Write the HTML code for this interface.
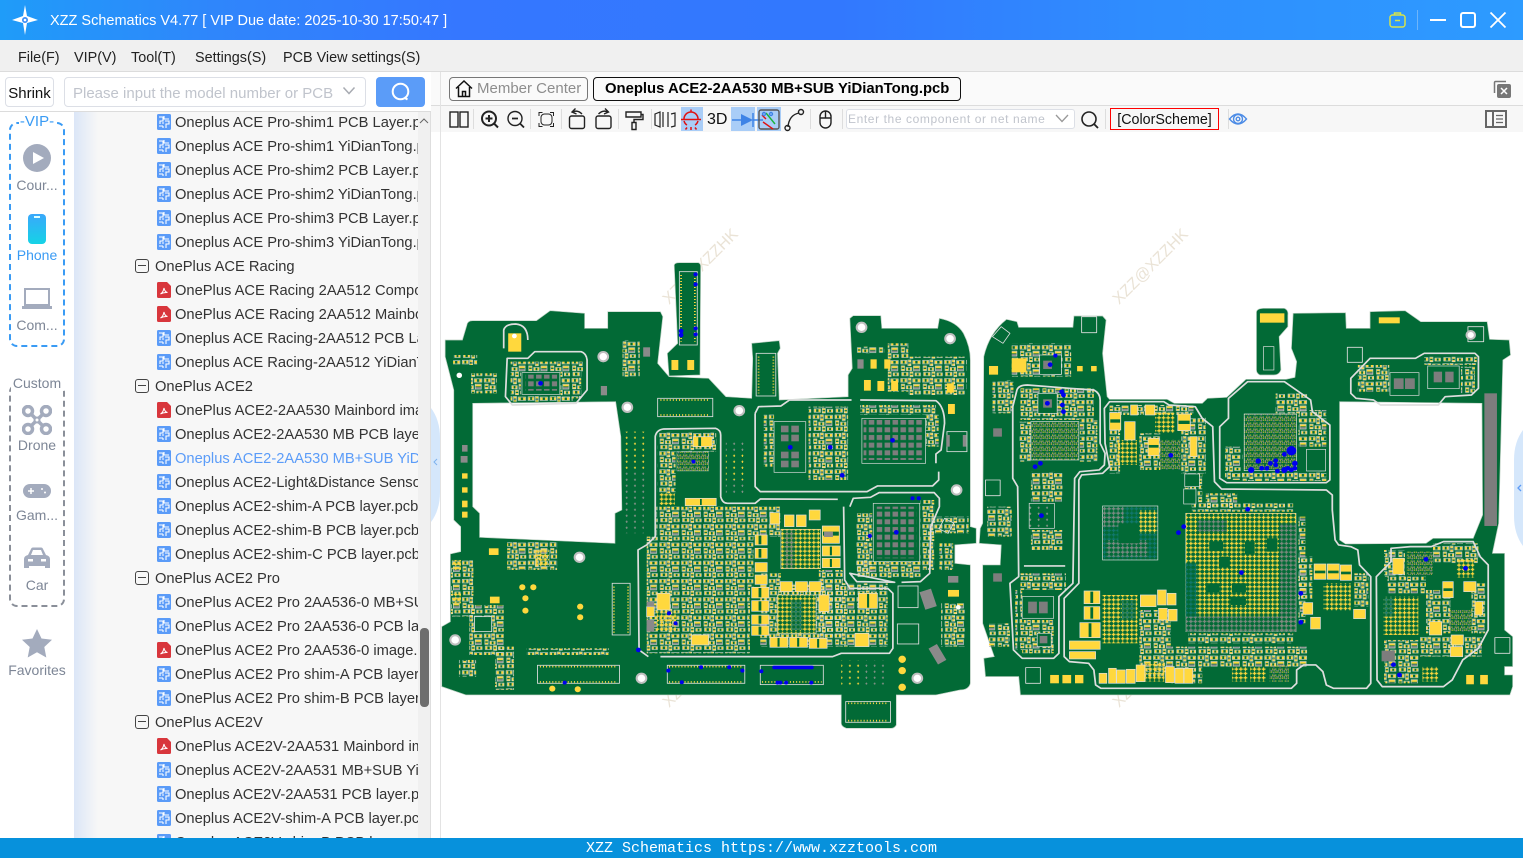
<!DOCTYPE html>
<html><head><meta charset="utf-8"><title>XZZ Schematics</title>
<style>
*{box-sizing:border-box;margin:0;padding:0}
html,body{width:1523px;height:858px;overflow:hidden;background:#fff;font-family:"Liberation Sans","Noto Sans CJK SC",sans-serif;color:#222}
.a{position:absolute}
#page{position:relative;width:1523px;height:858px;overflow:hidden}
.t{position:absolute;white-space:nowrap}
.m{top:48px;font-size:14.4px;line-height:20px;color:#222}
.r{position:absolute;left:0;height:24px;width:344px;font-size:14.7px;line-height:24px;white-space:nowrap;color:#333}
.r svg{position:absolute;left:83px;top:4px}
.r span{position:absolute;left:101px;top:1px}
.r.g span{left:81px}
.r.g i{position:absolute;left:61px;top:5px;width:14px;height:14px;border:1.3px solid #444;border-radius:3px}
.r.g i:after{content:"";position:absolute;left:2px;right:2px;top:5px;height:1.4px;background:#444}
.lab{position:absolute;left:0;width:74px;text-align:center;font-size:14px;color:#7d8696;line-height:18px}
.sep{position:absolute;top:109px;width:1px;height:20px;background:#ddd}
</style></head><body><div id="page">
<svg width="0" height="0" style="position:absolute"><defs>
<symbol id="pcb" viewBox="0 0 14 16"><rect width="14" height="16" rx="1.5" fill="#5a9bf8"/><path d="M2 3h4v4H3v3M7 2v3h5M8 7h4v3H9v4M2 12h4M6 12v2M5 9h2" fill="none" stroke="#fff" stroke-width="1.1"/></symbol>
<symbol id="pdf" viewBox="0 0 14 16"><path d="M1.5 0H10l4 4v10.5a1.5 1.5 0 0 1-1.5 1.5h-11A1.5 1.5 0 0 1 0 14.500V1.500A1.500 1.500 0 0 1 1.500 0z" fill="#d8363c"/><path d="M3.500 12c2-1 3-3.500 3.500-6 .4 2.500 1.500 4 3.500 4.500-2.500-.2-5 .3-7 1.500z" fill="none" stroke="#fff" stroke-width="1"/></symbol>
</defs></svg>

<!-- title bar -->
<div class="a" style="left:0;top:0;width:1523px;height:40px;background:linear-gradient(90deg,#1f9cf9 0,#2f86fb 14%,#3577ff 30%,#3278fe 55%,#2f8dfe 75%,#2d9bff 100%)"></div>
<svg class="a" style="left:10px;top:4px" width="30" height="32" viewBox="0 0 30 32"><path d="M15 1l2 11 11 4-11 3-2 12-2-12-11-3 11-4z" fill="#fff"/><circle cx="15" cy="16" r="3" fill="#3a8ef8"/><circle cx="15" cy="16" r="1.300" fill="#fff"/></svg>
<div class="t" style="left:50px;top:11px;font-size:14.5px;line-height:20px;color:#fff">XZZ Schematics V4.77 [ VIP Due date: 2025-10-30 17:50:47 ]</div>
<svg class="a" style="left:1388px;top:10px" width="20" height="20" viewBox="0 0 20 20"><rect x="2" y="5" width="15" height="12" rx="2.500" fill="none" stroke="#d7e34a" stroke-width="1.500"/><path d="M6.500 5V3h6v2M7 10.500h5" fill="none" stroke="#d7e34a" stroke-width="1.500"/></svg>
<div class="a" style="left:1417px;top:10px;width:1px;height:20px;background:#6eb5fa"></div>
<div class="a" style="left:1430px;top:19px;width:16px;height:2px;background:#fff"></div>
<div class="a" style="left:1460px;top:12px;width:16px;height:16px;border:2px solid #fff;border-radius:3px"></div>
<svg class="a" style="left:1489px;top:11px" width="18" height="18"><path d="M1.500 1.500l15 15M16.500 1.500l-15 15" stroke="#fff" stroke-width="1.800"/></svg>

<!-- menu -->
<div class="a" style="left:0;top:40px;width:1523px;height:32px;background:#f0f0f0;border-bottom:1px solid #dcdcdc"></div>
<div class="t m" style="left:18px">File(F)</div><div class="t m" style="left:74px">VIP(V)</div><div class="t m" style="left:131px">Tool(T)</div><div class="t m" style="left:195px">Settings(S)</div><div class="t m" style="left:283px">PCB View settings(S)</div>

<!-- search row -->
<div class="a" style="left:0;top:72px;width:431px;height:40px;background:#fff;border-bottom:1px solid #dcdcdc"></div>
<div class="a" style="left:5px;top:77px;width:49px;height:30px;border:1px solid #dcdfe6;border-radius:4px;font-size:15px;line-height:31px;text-align:center;color:#111">Shrink</div>
<div class="a" style="left:64px;top:77px;width:302px;height:30px;border:1px solid #dcdfe6;border-radius:4px"></div>
<div class="t" style="left:73px;top:84px;font-size:15px;line-height:20px;color:#c0c4cc">Please input the model number or PCB</div>
<svg class="a" style="left:342px;top:86px" width="14" height="10"><path d="M1.500 1.500L7 7.500l5.500-6" fill="none" stroke="#a8abb2" stroke-width="1.500"/></svg>
<div class="a" style="left:376px;top:77px;width:49px;height:30px;background:#5b9cf8;border-radius:4px"></div>
<svg class="a" style="left:390px;top:81px" width="22" height="22"><circle cx="10.500" cy="10.500" r="7.800" fill="none" stroke="#fff" stroke-width="2"/><path d="M15 17l2.500 1.500" stroke="#fff" stroke-width="2"/></svg>

<!-- left rail -->
<div class="a" style="left:9px;top:122px;width:56px;height:225px;border:2px dashed #3a9bf4;border-radius:8px"></div>
<div class="a" style="left:19px;top:113px;width:36px;height:18px;background:#fff;font-size:15px;line-height:18px;color:#3a9bf4;text-align:center">-VIP-</div>
<svg class="a" style="left:23px;top:144px" width="28" height="28"><circle cx="14" cy="14" r="14" fill="#a3abbd"/><path d="M10 8l11 6-11 6z" fill="#fff"/></svg>
<div class="lab" style="top:176px">Cour...</div>
<div class="a" style="left:28px;top:214px;width:18px;height:30px;border-radius:4px;background:linear-gradient(180deg,#3aa8fb,#15d3e6)"></div>
<div class="a" style="left:34px;top:216px;width:6px;height:1.500px;background:#dff"></div>
<div class="lab" style="top:246px;color:#3a9bf4">Phone</div>
<svg class="a" style="left:22px;top:288px" width="30" height="22"><rect x="3" y="1" width="24" height="16" fill="none" stroke="#a3abbd" stroke-width="2"/><path d="M0 18h30v3H0z" fill="#a3abbd"/></svg>
<div class="lab" style="top:316px">Com...</div>
<div class="a" style="left:9px;top:384px;width:56px;height:223px;border:2px dashed #8a8f99;border-radius:8px"></div>
<div class="a" style="left:11px;top:374px;width:52px;height:18px;background:#fff;font-size:14px;line-height:18px;color:#7d8696;text-align:center">Custom</div>
<svg class="a" style="left:22px;top:405px" width="30" height="30" fill="none" stroke="#a3abbd" stroke-width="3.500"><circle cx="6" cy="6" r="4.500"/><circle cx="24" cy="6" r="4.500"/><circle cx="6" cy="24" r="4.500"/><circle cx="24" cy="24" r="4.500"/><path d="M8 8l14 14M22 8L8 22"/><circle cx="15" cy="15" r="2.500" fill="#fff" stroke-width="2"/></svg>
<div class="lab" style="top:436px">Drone</div>
<svg class="a" style="left:23px;top:484px" width="28" height="14"><rect width="28" height="14" rx="7" fill="#a3abbd"/><path d="M5 7h6M8 4v6" stroke="#fff" stroke-width="1.500"/><circle cx="19" cy="5" r="1" fill="#fff"/><circle cx="22" cy="8.500" r="1" fill="#fff"/></svg>
<div class="lab" style="top:506px">Gam...</div>
<svg class="a" style="left:23px;top:547px" width="28" height="24"><path d="M5 8l3-6q.5-1.500 2-1.500h8q1.500 0 2 1.500l3 6q4 1 4 4v9h-5v-2H6v2H1v-9q0-3 4-4z" fill="#a3abbd"/><path d="M8 8l2-5h8l2 5z" fill="#fff"/><rect x="5" y="12" width="5" height="2.500" fill="#fff"/><rect x="18" y="12" width="5" height="2.500" fill="#fff"/></svg>
<div class="lab" style="top:576px">Car</div>
<svg class="a" style="left:22px;top:629px" width="30" height="29"><path d="M15 0l4.500 9.500 10.500 1.300-7.700 7.200 2 10.500L15 23.300 5.700 28.500l2-10.500L0 10.800 10.500 9.500z" fill="#a3abbd"/></svg>
<div class="lab" style="top:661px">Favorites</div>

<!-- tree -->
<div class="a" style="left:74px;top:112px;width:357px;height:726px;background:linear-gradient(90deg,#dbe6f7 0,#f7f7f7 24px);border-right:1px solid #dedede"></div>
<div class="a" style="left:418px;top:112px;width:12px;height:726px;background:#f0f0f0"></div>
<svg class="a" style="left:419px;top:117px" width="10" height="7"><path d="M1 6l4-4 4 4" fill="none" stroke="#666" stroke-width="1"/></svg>
<div class="a" style="left:420px;top:628px;width:9px;height:79px;background:#6e6e6e;border-radius:4px"></div>
<div class="a" style="left:74px;top:110px;width:344px;height:728px;overflow:hidden">
<div class="r" style="top:0"><svg width="14" height="16"><use href="#pcb"/></svg><span>Oneplus ACE Pro-shim1 PCB Layer.pcb</span></div>
<div class="r" style="top:24px"><svg width="14" height="16"><use href="#pcb"/></svg><span>Oneplus ACE Pro-shim1 YiDianTong.pcb</span></div>
<div class="r" style="top:48px"><svg width="14" height="16"><use href="#pcb"/></svg><span>Oneplus ACE Pro-shim2 PCB Layer.pcb</span></div>
<div class="r" style="top:72px"><svg width="14" height="16"><use href="#pcb"/></svg><span>Oneplus ACE Pro-shim2 YiDianTong.pcb</span></div>
<div class="r" style="top:96px"><svg width="14" height="16"><use href="#pcb"/></svg><span>Oneplus ACE Pro-shim3 PCB Layer.pcb</span></div>
<div class="r" style="top:120px"><svg width="14" height="16"><use href="#pcb"/></svg><span>Oneplus ACE Pro-shim3 YiDianTong.pcb</span></div>
<div class="r g" style="top:144px"><i></i><span>OnePlus ACE Racing</span></div>
<div class="r" style="top:168px"><svg width="14" height="16"><use href="#pdf"/></svg><span>OnePlus ACE Racing 2AA512 Component</span></div>
<div class="r" style="top:192px"><svg width="14" height="16"><use href="#pdf"/></svg><span>OnePlus ACE Racing 2AA512 Mainboard</span></div>
<div class="r" style="top:216px"><svg width="14" height="16"><use href="#pcb"/></svg><span>Oneplus ACE Racing-2AA512 PCB Layer.pcb</span></div>
<div class="r" style="top:240px"><svg width="14" height="16"><use href="#pcb"/></svg><span>Oneplus ACE Racing-2AA512 YiDianTong.pcb</span></div>
<div class="r g" style="top:264px"><i></i><span>OnePlus ACE2</span></div>
<div class="r" style="top:288px"><svg width="14" height="16"><use href="#pdf"/></svg><span>OnePlus ACE2-2AA530 Mainbord image.pdf</span></div>
<div class="r" style="top:312px"><svg width="14" height="16"><use href="#pcb"/></svg><span>Oneplus ACE2-2AA530 MB PCB layer.pcb</span></div>
<div class="r" style="top:336px"><svg width="14" height="16"><use href="#pcb"/></svg><span style="color:#5b9cf8">Oneplus ACE2-2AA530 MB+SUB YiDianTong.pcb</span></div>
<div class="r" style="top:360px"><svg width="14" height="16"><use href="#pcb"/></svg><span>Oneplus ACE2-Light&amp;Distance Sensor.pcb</span></div>
<div class="r" style="top:384px"><svg width="14" height="16"><use href="#pcb"/></svg><span>Oneplus ACE2-shim-A PCB layer.pcb</span></div>
<div class="r" style="top:408px"><svg width="14" height="16"><use href="#pcb"/></svg><span>Oneplus ACE2-shim-B PCB layer.pcb</span></div>
<div class="r" style="top:432px"><svg width="14" height="16"><use href="#pcb"/></svg><span>Oneplus ACE2-shim-C PCB layer.pcb</span></div>
<div class="r g" style="top:456px"><i></i><span>OnePlus ACE2 Pro</span></div>
<div class="r" style="top:480px"><svg width="14" height="16"><use href="#pcb"/></svg><span>OnePlus ACE2 Pro 2AA536-0 MB+SUB.pcb</span></div>
<div class="r" style="top:504px"><svg width="14" height="16"><use href="#pcb"/></svg><span>OnePlus ACE2 Pro 2AA536-0 PCB layer.pcb</span></div>
<div class="r" style="top:528px"><svg width="14" height="16"><use href="#pdf"/></svg><span>OnePlus ACE2 Pro 2AA536-0 image.pdf</span></div>
<div class="r" style="top:552px"><svg width="14" height="16"><use href="#pcb"/></svg><span>OnePlus ACE2 Pro shim-A PCB layer.pcb</span></div>
<div class="r" style="top:576px"><svg width="14" height="16"><use href="#pcb"/></svg><span>OnePlus ACE2 Pro shim-B PCB layer.pcb</span></div>
<div class="r g" style="top:600px"><i></i><span>OnePlus ACE2V</span></div>
<div class="r" style="top:624px"><svg width="14" height="16"><use href="#pdf"/></svg><span>OnePlus ACE2V-2AA531 Mainbord image.pdf</span></div>
<div class="r" style="top:648px"><svg width="14" height="16"><use href="#pcb"/></svg><span>Oneplus ACE2V-2AA531 MB+SUB YiDianTong.pcb</span></div>
<div class="r" style="top:672px"><svg width="14" height="16"><use href="#pcb"/></svg><span>Oneplus ACE2V-2AA531 PCB layer.pcb</span></div>
<div class="r" style="top:696px"><svg width="14" height="16"><use href="#pcb"/></svg><span>Oneplus ACE2V-shim-A PCB layer.pcb</span></div>
<div class="r" style="top:720px"><svg width="14" height="16"><use href="#pcb"/></svg><span>Oneplus ACE2V-shim-B PCB layer.pcb</span></div>
</div>
<svg class="a" style="left:431px;top:408px" width="10" height="114"><path d="M0 0Q9 12 9 30V84Q9 102 0 114z" fill="#d5e7fb"/><path d="M6 51l-3 3 3 3" fill="none" stroke="#7eb2ee" stroke-width="1"/></svg>

<!-- right header -->
<div class="a" style="left:431px;top:72px;width:1092px;height:34px;background:#fafafa;border-bottom:1px solid #dcdcdc"></div>
<div class="a" style="left:431px;top:106px;width:1092px;height:26px;background:#f7f7f7"></div>
<div class="a" style="left:440px;top:72px;width:1px;height:766px;background:#e3e3e3"></div>
<div class="a" style="left:449px;top:77px;width:139px;height:24px;border:1px solid #777;border-radius:4px"></div>
<svg class="a" style="left:455px;top:79px" width="18" height="19" fill="none" stroke="#111" stroke-width="1.500"><path d="M1 9.500L9 2l8 7.500M3.500 8v9.500h11V8M7.500 17.500v-5h3v5"/></svg>
<div class="t" style="left:477px;top:79px;font-size:15px;line-height:20px;color:#8d8d8d">Member Center</div>
<div class="a" style="left:593px;top:77px;width:368px;height:24px;border:1px solid #111;border-radius:4px"></div>
<div class="t" style="left:605px;top:79px;font-size:14.85px;line-height:20px;color:#000;font-weight:bold">Oneplus ACE2-2AA530 MB+SUB YiDianTong.pcb</div>
<svg class="a" style="left:1493px;top:80px" width="19" height="19"><path d="M1.500 13V2.500a1 1 0 0 1 1-1H13" fill="none" stroke="#777" stroke-width="1.500"/><rect x="4" y="4" width="14" height="14" rx="2" fill="#777"/><path d="M8 8l6 6M14 8l-6 6" stroke="#fff" stroke-width="1.500"/></svg>

<!-- toolbar -->
<div class="a" style="left:681px;top:107px;width:22px;height:24px;background:#a9cdf7"></div>
<div class="a" style="left:731px;top:107px;width:24px;height:24px;background:#a9cdf7"></div>
<div class="a" style="left:757px;top:107px;width:24px;height:24px;background:#a9cdf7"></div>
<svg class="a" style="left:441px;top:106px" width="400" height="26" fill="none" stroke="#222" stroke-width="1.400">
<rect x="9" y="6" width="8" height="15"/><rect x="19" y="6" width="8" height="15"/>
<circle cx="48" cy="12.500" r="7" stroke-width="2"/><path d="M53 17.500l4 4M48 9v7M44.500 12.500h7" stroke-width="2"/>
<circle cx="74" cy="12.500" r="7"/><path d="M79 17.500l4 4M71 12.500h6" stroke-width="1.800"/>
<path d="M98 10V6.500h3.500M109 6.500h3.500V10M112.500 17v3.500H109M101.500 20.500H98V17" stroke-width="1"/><rect x="100" y="8" width="11" height="11" rx="3.500" stroke-width="1"/>
<rect x="128.500" y="10" width="15" height="12.500" rx="2"/><path d="M141 8Q136.500 3.500 131.500 6M134.500 2.500L131 6l4.500 2"/>
<rect x="155" y="10" width="15" height="12.500" rx="2"/><path d="M157.500 8Q162 3.500 167 6M164 2.500L167.500 6l-4.500 2"/>
<path d="M185 6h15v5h-15zM200 8.500h2v5h-9v3M191 16.500h4v7h-4z"/>
<path d="M219 6v15l-5-2V8zM222 6v15M227 6v15M230 8l4-1v13l-4 1" stroke-width="1.200"/>
<path d="M243 13a7 7 0 0 1 14 0M250 3.500v2.500M240 13.500h20M243 15q1 3 3 4M257 15q-1 3-3 4M246 21.500l-1.500 2M254 21.500l1.500 2M250 21v3" stroke="#e01010" stroke-width="1.500"/>
<path d="M291 14h9M312 14h10" stroke="#3d83e6"/><path d="M300 8l12 6-12 6z" fill="#3d83e6" stroke="none"/><path d="M312 7v14" stroke="#3d83e6" stroke-width="1.500"/>
<rect x="318" y="4" width="20" height="19" rx="2" stroke="#555"/><path d="M322 16l10 7M321 9l4 4" stroke="#e01010"/><path d="M325 7l9 11" stroke="#19b33b"/><circle cx="330" cy="8" r="1.500" stroke="#3d83e6"/><circle cx="323" cy="8" r="1.500" stroke="#3d83e6"/>
<path d="M347 21q1-12 11-14"/><circle cx="346.500" cy="22" r="2.500"/><circle cx="360" cy="6" r="2.500"/>
<rect x="379" y="5" width="11" height="17" rx="5.500"/><path d="M384.500 5v7M379 12h11"/>
</svg>
<div class="t" style="left:707px;top:110px;font-size:16px;line-height:20px;color:#111">3D</div>
<div class="sep" style="left:473px"></div>
<div class="sep" style="left:530px"></div>
<div class="sep" style="left:561px"></div>
<div class="sep" style="left:618px"></div>
<div class="sep" style="left:651px"></div>
<div class="sep" style="left:810px"></div>
<div class="sep" style="left:842px"></div>
<div class="a" style="left:846px;top:109px;width:229px;height:20px;border:1px solid #dcdfe6;border-radius:3px;background:#fff"></div>
<div class="t" style="left:848px;top:112px;width:200px;overflow:hidden;font-size:12px;line-height:14px;color:#c0c4cc;letter-spacing:.6px">Enter the component or net name</div>
<svg class="a" style="left:1055px;top:114px" width="14" height="10"><path d="M1 1l6 6.500L13 1" fill="none" stroke="#999" stroke-width="1.300"/></svg>
<svg class="a" style="left:1080px;top:110px" width="20" height="20"><circle cx="9" cy="9" r="7" fill="none" stroke="#222" stroke-width="1.600"/><path d="M14 14l4 4" stroke="#222" stroke-width="1.800"/></svg>
<div class="sep" style="left:1105px"></div>
<div class="a" style="left:1110px;top:108px;width:109px;height:22px;border:1px solid #f00;font-size:14.3px;line-height:22px;text-align:center;color:#111">[ColorScheme]</div>
<div class="sep" style="left:1228px"></div>
<svg class="a" style="left:1228px;top:110px" width="20" height="18" fill="none" stroke="#4d8ce6" stroke-width="1.400"><path d="M1.500 9Q10 -1 18.500 9 10 19 1.500 9z"/><circle cx="10" cy="9" r="4.500"/><circle cx="10" cy="9" r="1.800"/></svg>
<svg class="a" style="left:1485px;top:110px" width="22" height="18"><rect x="1" y="1" width="20" height="16" fill="none" stroke="#666" stroke-width="2"/><path d="M8 1v16" stroke="#666" stroke-width="2"/><path d="M11 5.500h7M11 9h7M11 12.500h7" stroke="#666" stroke-width="1.300"/></svg>

<!-- canvas -->
<svg class="a" style="left:441px;top:132px" width="1082" height="706" viewBox="441 132 1082 706">
<defs>
<pattern id="yp" width="13" height="13" patternUnits="userSpaceOnUse"><path d="M1 4.800h11v3.400h-11zM4.800 1h3.400v11H4.800z" fill="#ffd83d"/></pattern>
<pattern id="gp" width="13" height="13" patternUnits="userSpaceOnUse"><path d="M1 4.800h11v3.400h-11zM4.800 1h3.400v11H4.800z" fill="#7f8a7f"/></pattern>
<pattern id="tp" width="13" height="13" patternUnits="userSpaceOnUse"><path d="M1 4.800h11v3.400h-11zM4.800 1h3.400v11H4.800z" fill="#11786f"/></pattern>
<pattern id="yd" width="18" height="18" patternUnits="userSpaceOnUse"><path d="M4 2h3v3H4zM13 2h3v3h-3zM8 7h3v3H8zM1 11h3v3H1zM13 11h4v3h-4z" fill="#ffd83d"/><path d="M8 2h4v4H8zM1 6h4v4H1zM14 6h3v3h-3zM6 12h5v4H6z" fill="#808880"/></pattern>
<pattern id="gg" width="23" height="23" patternUnits="userSpaceOnUse"><rect x="3" y="3" width="16" height="15" fill="#7d7d7d"/></pattern>
<pattern id="vv" width="24" height="18" patternUnits="userSpaceOnUse"><path d="M11 4h6v2.500h-6zM13 2h2.500v7H13z" fill="#ffd83d"/></pattern>
<pattern id="vg" width="24" height="18" patternUnits="userSpaceOnUse"><path d="M11 4h6v2.500h-6zM13 2h2.500v7H13z" fill="#8c948c"/></pattern>
<pattern id="c" width="86" height="74" patternUnits="userSpaceOnUse" patternTransform="scale(.74)">
<g fill="#ffd83d"><rect x="3" y="5" width="7" height="11"/><rect x="17" y="5" width="7" height="11"/><rect x="32" y="3" width="9" height="7"/><rect x="32" y="17" width="9" height="7"/><rect x="50" y="6" width="9" height="11"/><rect x="68" y="6" width="9" height="11"/><rect x="5" y="27" width="11" height="6"/><rect x="5" y="38" width="11" height="6"/><rect x="25" y="33" width="6" height="11"/><rect x="38" y="33" width="6" height="11"/><rect x="53" y="27" width="22" height="8"/><rect x="7" y="53" width="7" height="12"/><rect x="23" y="53" width="7" height="12"/><rect x="39" y="51" width="10" height="6"/><rect x="39" y="62" width="10" height="6"/><rect x="59" y="55" width="6" height="10"/><rect x="72" y="55" width="6" height="10"/></g>
<g fill="#8a8a8a"><rect x="53" y="38" width="22" height="7"/><rect x="34" y="11" width="5" height="5"/></g>
<g fill="none" stroke="#dcdcdc" stroke-width="2.400"><rect x="2" y="3" width="23" height="15"/><rect x="30" y="2" width="12" height="23"/><rect x="49" y="4" width="29" height="14"/><rect x="4" y="26" width="13" height="19"/><rect x="24" y="32" width="21" height="13"/><rect x="52" y="26" width="24" height="20"/><rect x="6" y="52" width="25" height="14"/><rect x="38" y="50" width="12" height="19"/><rect x="58" y="54" width="21" height="12"/></g>
</pattern>
</defs>
<g font-family="Liberation Sans, sans-serif" font-size="16" fill="#eae3d6">
<text transform="translate(669,305) rotate(-45)">XZZ@XZZHK</text>
<text transform="translate(1119,305) rotate(-45)">XZZ@XZZHK</text>
<text transform="translate(669,708) rotate(-45)">XZZ@XZZHK</text>
<text transform="translate(1119,708) rotate(-45)">XZZ@XZZHK</text>
</g>

<!-- LEFT BOARD -->
<g transform="translate(440,250) scale(.3444,.3333)">
<path fill="#026a36" stroke="#bcd0c2" stroke-width="2" fill-rule="evenodd" d="M15,270 L65,270 L78,225 Q80,212 95,212 L280,212 L320,182 L420,190 L420,235 L487,235 L487,185 L640,185 L647,200 L632,340 L665,380 L780,385 L830,440 L905,445 L908,325 L905,280 L985,272 L988,295 L980,310 L985,450 L1185,440 L1185,375 L1197,355 L1190,205 L1200,197 L1280,197 L1283,235 L1445,235 L1450,205 Q1500,215 1520,250 Q1540,290 1540,330 L1540,830 L1557,835 L1557,880 L1495,885 L1495,940 L1540,945 L1540,1300 Q1535,1320 1510,1320 L1440,1335 L1325,1335 L1325,1425 Q1320,1435 1310,1435 L1180,1435 Q1165,1430 1165,1420 L1165,1335 L75,1335 L5,1310 L5,1130 L30,1115 L30,912 L60,905 L60,830 L40,810 L40,420 L15,320 Z M95,460 L510,455 L525,560 L528,780 L508,790 L508,880 L115,862 L115,790 L95,770 Z"/>
<path fill="#026a36" stroke="#bcd0c2" stroke-width="2" d="M680,45 Q682,38 695,38 L750,38 Q757,40 757,50 L755,375 L665,378 L660,310 L690,280 Z"/>
<!-- component zones -->
<g fill="url(#c)">
<rect x="632" y="545" width="170" height="60"/><rect x="632" y="605" width="52" height="125"/><rect x="628" y="770" width="360" height="90"/><rect x="600" y="860" width="310" height="150"/><rect x="600" y="1010" width="300" height="200"/><rect x="930" y="1000" width="370" height="190"/><rect x="930" y="970" width="60" height="30"/><rect x="1100" y="960" width="70" height="200"/>
<rect x="205" y="335" width="210" height="30"/><rect x="205" y="365" width="30" height="70"/><rect x="350" y="365" width="60" height="80"/><rect x="205" y="435" width="180" height="20"/>
<rect x="1070" y="470" width="115" height="220"/><rect x="940" y="490" width="30" height="160"/><rect x="1220" y="465" width="220" height="30"/><rect x="1410" y="490" width="38" height="100"/>
<rect x="1205" y="790" width="50" height="180"/><rect x="1395" y="750" width="40" height="210"/><rect x="1205" y="930" width="190" height="55"/>
<rect x="1210" y="290" width="80" height="20"/><rect x="1300" y="280" width="60" height="145"/><rect x="1360" y="320" width="170" height="115"/>
<rect x="530" y="270" width="50" height="110"/><rect x="38" y="315" width="70" height="30"/><rect x="90" y="370" width="75" height="60"/>
<rect x="195" y="875" width="145" height="85"/>
<rect x="32" y="930" width="65" height="170"/><rect x="85" y="1065" width="100" height="150"/><rect x="160" y="1190" width="55" height="130"/><rect x="55" y="1230" width="50" height="50"/>
<rect x="1425" y="800" width="110" height="50"/><rect x="1450" y="880" width="40" height="80"/><rect x="1455" y="1060" width="70" height="130"/>
</g>
<rect x="250" y="1195" width="240" height="20" fill="url(#c)"/>
<!-- shield frames -->
<g fill="none" stroke="#dedede" stroke-width="5" stroke-linejoin="round">
<path d="M195,325 L255,325 L275,305 L410,305 Q425,310 427,330 L427,420 L395,460 L210,465 L190,440 Z"/>
<path d="M185,295 L185,240 Q190,222 220,222 Q255,225 255,270"/>
<path d="M605,1220 L578,1200 L575,900 L600,885 L625,860 L625,560 Q628,540 650,537 L800,535 Q815,540 815,555 L815,740 Q820,760 835,760 L915,760 L930,747 L1155,748"/>
<path d="M640,1220 L1140,1220 L1165,1210 L1305,1210 L1315,1195 L1315,1030 L1300,1015 L1190,1015 L1175,990 L1172,770"/>
<path d="M915,490 L925,470 L990,468 L1015,450 L1195,450 M1220,450 L1440,452 Q1465,470 1465,520 L1455,600 L1440,612 L1440,640 M1448,665 L1448,690 L1430,708 L1270,708 L1240,725 L930,725 L915,710 L915,490"/>
<path d="M1190,770 L1200,745 L1250,742 L1275,728 L1435,728 L1450,745 L1450,770 L1425,830 L1422,970 L1395,995 L1340,997 M1320,997 L1210,995 L1190,970 Z"/>
</g>
<!-- BGAs -->
<rect x="1225" y="505" width="185" height="135" fill="#026a36" stroke="#dedede" stroke-width="2"/><rect x="1230" y="510" width="175" height="120" fill="url(#gg)"/>
<rect x="1258" y="760" width="135" height="175" fill="#026a36" stroke="#dedede" stroke-width="2"/><rect x="1268" y="770" width="115" height="155" fill="url(#gg)"/>
<rect x="970" y="515" width="92" height="152" fill="#026a36" stroke="#dedede" stroke-width="2"/><g fill="#7d7d7d"><rect x="990" y="527" width="22" height="20"/><rect x="1020" y="527" width="22" height="20"/><rect x="990" y="554" width="22" height="20"/><rect x="1020" y="554" width="22" height="20"/><rect x="990" y="605" width="22" height="20"/><rect x="1020" y="605" width="22" height="20"/><rect x="990" y="632" width="22" height="20"/><rect x="1020" y="632" width="22" height="20"/></g>
<rect x="238" y="368" width="110" height="65" fill="#026a36" stroke="#dedede" stroke-width="2"/><rect x="248" y="374" width="92" height="48" fill="url(#gg)"/>
<rect x="688" y="605" width="92" height="58" fill="url(#yd)" stroke="#dedede"/>
<rect x="990" y="838" width="115" height="118" fill="#026a36" stroke="#dedede" stroke-width="2"/><rect x="990" y="838" width="115" height="118" fill="url(#yp)"/><rect x="1000" y="840" width="30" height="115" fill="url(#gp)"/>
<rect x="980" y="1035" width="112" height="115" fill="#026a36" stroke="#dedede" stroke-width="2"/><rect x="980" y="1035" width="112" height="115" fill="url(#yp)"/><rect x="1020" y="1050" width="30" height="90" fill="url(#tp)"/>
<rect x="630" y="1085" width="55" height="58" fill="url(#yp)"/><rect x="637" y="730" width="45" height="35" fill="url(#yp)"/><rect x="35" y="930" width="26" height="30" fill="url(#yp)"/><rect x="35" y="1030" width="26" height="30" fill="url(#yp)"/><rect x="277" y="900" width="40" height="50" fill="url(#yp)" stroke="#dedede"/>
<!-- vias -->
<rect x="535" y="545" width="60" height="120" fill="url(#vv)"/><rect x="535" y="665" width="60" height="115" fill="url(#vg)"/><rect x="522" y="780" width="70" height="70" fill="url(#vg)"/>
<rect x="830" y="570" width="60" height="40" fill="url(#vg)"/><rect x="830" y="610" width="60" height="80" fill="url(#vv)"/><rect x="830" y="690" width="60" height="45" fill="url(#vg)"/>
<rect x="1165" y="1232" width="60" height="72" fill="url(#vv)"/><rect x="1225" y="1232" width="75" height="72" fill="url(#vg)"/>
<!-- connectors -->
<g fill="#026a36" stroke="#dedede" stroke-width="2.500">
<rect x="695" y="65" width="52" height="220"/><rect x="918" y="310" width="57" height="128"/>
<rect x="283" y="1246" width="238" height="54"/><rect x="660" y="1246" width="225" height="54"/><rect x="930" y="1246" width="183" height="58"/><rect x="1178" y="1355" width="130" height="62"/><rect x="500" y="1000" width="52" height="155"/><rect x="632" y="445" width="160" height="55"/>
<rect x="1472" y="545" width="58" height="60"/><rect x="1330" y="1008" width="58" height="65"/><rect x="1328" y="1122" width="62" height="60"/><rect x="100" y="1100" width="50" height="45"/>
</g>
<g fill="none" stroke="#ffd83d" stroke-width="5" stroke-dasharray="3 6">
<path d="M700,75V275M740,75V275M925,320V430M968,320V430M290,1250H515M290,1296H515M665,1250H880M665,1296H880M935,1296H1108M1185,1360H1300M1185,1412H1300M505,1010V1150M546,1010V1150M640,450H780M640,495H780"/>
</g>
<!-- pads -->
<g fill="#ffd83d">
<rect x="672" y="330" width="20" height="30"/><rect x="718" y="330" width="20" height="30"/><rect x="1231" y="390" width="20" height="32"/><rect x="1270" y="393" width="20" height="30"/><rect x="1310" y="393" width="20" height="30"/><rect x="1250" y="328" width="18" height="28"/><rect x="1290" y="328" width="18" height="28"/><rect x="1472" y="400" width="20" height="28"/><rect x="1475" y="462" width="20" height="30"/><rect x="1475" y="1020" width="32" height="20"/><rect x="142" y="895" width="28" height="20"/><rect x="145" y="1040" width="28" height="20"/><rect x="64" y="670" width="16" height="16"/><rect x="64" y="712" width="16" height="16"/><rect x="64" y="752" width="16" height="20"/><rect x="64" y="785" width="16" height="18"/>
</g>
<g fill="#ffd83d" stroke="#dedede" stroke-width="2">
<rect x="735" y="560" width="55" height="30"/><rect x="712" y="745" width="90" height="22"/>
<rect x="905" y="1012" width="50" height="32"/><rect x="905" y="1052" width="50" height="32"/><rect x="905" y="1095" width="50" height="28"/><rect x="905" y="1128" width="50" height="28"/>
<rect x="915" y="855" width="35" height="30"/><rect x="915" y="895" width="35" height="30"/><rect x="915" y="938" width="35" height="28"/><rect x="915" y="975" width="35" height="28"/>
<rect x="1110" y="828" width="50" height="52"/><rect x="1110" y="888" width="52" height="30"/><rect x="1110" y="925" width="52" height="28"/>
<rect x="958" y="788" width="28" height="34"/><rect x="1000" y="795" width="28" height="35"/><rect x="1035" y="795" width="28" height="35"/><rect x="1072" y="780" width="32" height="30"/>
<rect x="958" y="1162" width="52" height="30"/><rect x="1015" y="1162" width="52" height="30"/><rect x="1072" y="1165" width="52" height="30"/><rect x="730" y="1155" width="50" height="30"/><rect x="988" y="995" width="35" height="30"/><rect x="1032" y="995" width="35" height="30"/><rect x="1072" y="995" width="35" height="30"/><rect x="630" y="1030" width="38" height="50"/><rect x="1100" y="1035" width="30" height="50"/><rect x="1215" y="1030" width="55" height="45"/><rect x="1205" y="1150" width="40" height="40"/><rect x="600" y="1070" width="22" height="30"/>
</g>
<g fill="#026a36"><rect x="1112" y="845" width="46" height="12"/><rect x="1132" y="890" width="6" height="26"/><rect x="1132" y="927" width="6" height="24"/><rect x="925" y="857" width="8" height="26"/><rect x="925" y="897" width="8" height="26"/><rect x="925" y="1014" width="8" height="28"/><rect x="925" y="1054" width="8" height="28"/><rect x="925" y="1097" width="8" height="24"/><rect x="925" y="1130" width="8" height="24"/><rect x="980" y="1164" width="6" height="26"/><rect x="1037" y="1164" width="6" height="26"/><rect x="1095" y="1167" width="6" height="26"/><rect x="1240" y="1032" width="6" height="41"/><rect x="755" y="747" width="5" height="18"/><rect x="750" y="562" width="8" height="26"/></g>
<g fill="#8a8a8a"><rect x="590" y="292" width="20" height="28"/><rect x="467" y="408" width="18" height="28"/><rect x="1212" y="328" width="18" height="28"/><rect x="1475" y="978" width="30" height="20"/><rect x="64" y="585" width="16" height="20"/><rect x="60" y="618" width="20" height="20"/><rect x="1115" y="845" width="26" height="16"/><rect x="1470" y="555" width="10" height="35"/><rect x="1518" y="555" width="10" height="35"/><rect x="600" y="1055" width="22" height="15"/><rect x="600" y="1110" width="22" height="35"/></g>
<rect x="1400" y="1020" width="35" height="55" fill="#8a8a8a" transform="rotate(-18 1418 1048)"/><rect x="1430" y="1185" width="28" height="55" fill="#8a8a8a" transform="rotate(-30 1445 1212)"/><rect x="1455" y="810" width="30" height="35" fill="none" stroke="#dedede" stroke-width="2.500" transform="rotate(28 1470 828)"/>
<!-- circles -->
<g fill="#ffd83d"><circle cx="239" cy="1012" r="9"/><circle cx="271" cy="1012" r="9"/><circle cx="248" cy="1045" r="9"/><circle cx="248" cy="1082" r="9"/><circle cx="407" cy="1070" r="9"/><circle cx="407" cy="1102" r="9"/><circle cx="326" cy="1316" r="9"/><circle cx="400" cy="1318" r="9"/><circle cx="1342" cy="1228" r="11"/><circle cx="1342" cy="1262" r="11"/><circle cx="1342" cy="1312" r="11"/></g>
<g fill="#fff" stroke="#bfbfbf" stroke-width="6"><circle cx="474" cy="320" r="14"/><circle cx="544" cy="472" r="14"/><circle cx="869" cy="482" r="14"/><circle cx="1224" cy="232" r="14"/><circle cx="1481" cy="266" r="14"/><circle cx="1500" cy="720" r="14"/><circle cx="405" cy="922" r="14"/><circle cx="44" cy="1170" r="14"/><circle cx="585" cy="1285" r="14"/><circle cx="1386" cy="1285" r="14"/></g>
<g fill="#fff"><circle cx="56" cy="376" r="8"/><circle cx="1505" cy="1072" r="7"/></g><rect x="198" y="250" width="38" height="55" fill="#ffd83d"/><circle cx="216" cy="258" r="7" fill="#fff"/>
<g fill="#0000ee"><circle cx="742" cy="73" r="6"/><circle cx="742" cy="103" r="6"/><circle cx="700" cy="243" r="7"/><circle cx="700" cy="255" r="7"/><circle cx="742" cy="235" r="6"/><circle cx="742" cy="253" r="6"/><circle cx="292" cy="400" r="7"/><circle cx="736" cy="635" r="6"/><circle cx="1017" cy="592" r="7"/><circle cx="1133" cy="592" r="7"/><circle cx="1168" cy="676" r="7"/><circle cx="1314" cy="571" r="7"/><circle cx="1325" cy="847" r="7"/><circle cx="1248" cy="858" r="6"/><circle cx="1372" cy="745" r="6"/><circle cx="1390" cy="745" r="6"/><circle cx="665" cy="1090" r="6"/><circle cx="684" cy="1120" r="6"/><circle cx="576" cy="1200" r="7"/><circle cx="362" cy="1298" r="6"/><circle cx="663" cy="1262" r="6"/><circle cx="758" cy="1252" r="6"/><circle cx="840" cy="1252" r="6"/><circle cx="878" cy="1262" r="6"/><circle cx="702" cy="1297" r="6"/><circle cx="933" cy="1264" r="6"/><rect x="965" y="1247" width="120" height="11" rx="5"/><circle cx="980" cy="1298" r="6"/><circle cx="988" cy="1298" r="6"/><circle cx="1005" cy="1298" r="6"/><circle cx="1078" cy="1298" r="6"/></g>
</g>

<!-- RIGHT BOARD -->
<g transform="translate(975,290) scale(.3496,.3333)">
<path fill="#026a36" stroke="#bcd0c2" stroke-width="2" fill-rule="evenodd" d="M25,200 Q40,130 90,88 L120,95 L125,112 L280,112 L283,78 L365,78 L375,90 L365,190 L378,320 L385,328 L550,328 L570,340 L650,340 L665,325 L720,322 L775,268 L890,268 L915,262 L920,215 L905,175 L910,70 L1060,68 L1062,115 L1130,115 L1130,65 L1230,62 L1275,95 L1465,95 L1472,148 L1528,150 L1532,195 L1510,210 L1498,700 L1480,790 L1515,790 L1515,1020 L1538,1040 L1538,1130 L1515,1130 L1515,1155 L1538,1155 L1538,1190 L1530,1215 L130,1215 L125,1160 L30,1160 L25,1105 L55,1100 L22,1000 L22,825 L72,825 L75,765 L12,760 L15,715 L22,700 Z M1043,335 L1450,340 L1452,675 L1425,745 L1310,745 L1290,760 L1060,762 L1043,750 Z"/>
<path fill="#026a36" stroke="#bcd0c2" stroke-width="2" d="M805,65 Q808,55 825,55 L885,55 Q897,60 895,75 L895,110 L870,140 L875,240 Q870,255 855,255 L815,255 Q805,250 805,240 Z"/>
<!-- component zones -->
<g fill="url(#c)">
<rect x="105" y="160" width="170" height="100"/><rect x="50" y="270" width="60" height="100"/><rect x="130" y="295" width="210" height="95"/><rect x="300" y="390" width="50" height="125"/><rect x="125" y="395" width="35" height="120"/><rect x="160" y="545" width="90" height="90"/><rect x="160" y="720" width="90" height="60"/><rect x="130" y="850" width="130" height="50"/><rect x="115" y="900" width="20" height="180"/><rect x="135" y="990" width="90" height="100"/><rect x="40" y="1000" width="60" height="70"/><rect x="35" y="650" width="70" height="90"/>
<rect x="385" y="345" width="240" height="30"/><rect x="385" y="380" width="30" height="170"/><rect x="470" y="430" width="60" height="110"/><rect x="590" y="380" width="70" height="170"/>
<rect x="925" y="360" width="80" height="110"/><rect x="715" y="470" width="50" height="100"/><rect x="760" y="545" width="245" height="28"/><rect x="860" y="310" width="90" height="60"/>
<rect x="1095" y="225" width="90" height="80"/><rect x="1285" y="200" width="150" height="25"/><rect x="1390" y="230" width="40" height="80"/>
<rect x="600" y="550" width="50" height="90"/><rect x="660" y="610" width="90" height="40"/><rect x="620" y="640" width="290" height="25"/><rect x="925" y="680" width="20" height="320"/><rect x="925" y="800" width="40" height="130"/><rect x="1085" y="850" width="40" height="100"/>
<rect x="610" y="1030" width="300" height="30"/><rect x="470" y="960" width="90" height="200"/><rect x="560" y="1070" width="90" height="110"/><rect x="650" y="1070" width="300" height="60"/>
<rect x="1170" y="780" width="60" height="80"/><rect x="1310" y="760" width="130" height="60"/><rect x="1290" y="900" width="70" height="130"/><rect x="1420" y="880" width="40" height="150"/><rect x="1180" y="860" width="110" height="50"/><rect x="1170" y="1050" width="100" height="130"/><rect x="1270" y="1040" width="180" height="60"/>
</g>
<!-- frames -->
<g fill="none" stroke="#dedede" stroke-width="5" stroke-linejoin="round">
<path d="M120,300 Q125,285 150,285 L270,295 L340,300 Q358,310 358,330 L358,460 L372,490 L370,525 L355,540 L300,545 L285,565 L280,880 L240,920 L240,1090 L225,1105 L135,1105 L110,1080 L100,880 L125,860 L122,590 L108,565 L108,350 Z"/>
<path d="M297,570 L305,555 L365,550 L385,530 L372,460 L370,355 L385,335 L540,335 L555,345 L630,350 L650,385 L680,410 L685,575 L705,597 L1005,600 L1022,615 L1022,660 L1030,750 L1040,765 L1075,770 L1095,780 L1100,825 L1132,860 L1132,1180 L1120,1195 L1025,1195 L1005,1185 L995,1145 L975,1125 L940,1125 L920,1140 L920,1180 L905,1195 L360,1195 L345,1185 L340,1140 L325,1120 L270,1115 L255,1100 L255,925 L297,880 Z"/>
<path d="M700,410 L725,385 L725,325 L780,275 L885,275 L960,330 L965,365 L1015,405 L1015,570 L1005,578 L720,578 L700,565 Z"/>
<path d="M1075,265 L1130,205 L1260,205 L1285,190 L1430,190 L1440,200 L1440,295 L1420,315 L1345,320 L1325,345 L1160,345 L1140,330 L1090,325 L1075,310 Z"/>
<path d="M1150,1170 L1148,860 L1190,815 L1190,775 L1245,770 L1305,770 L1340,755 L1425,755 L1445,800 L1468,825 L1468,1020 L1440,1075 L1395,1110 L1365,1170 L1340,1190 L1165,1190 Z"/>
<path d="M140,828 L258,828"/>
<path d="M75,110 L100,130 L80,160 L50,140 Z M305,80H348V128H305Z M1065,172H1108V217H1065Z M30,570H72V617H30Z M145,1133H187V1180H145Z M1487,1043H1530V1090H1487Z M1410,110H1455V155H1410Z" stroke-width="2.500"/>
</g>
<!-- BGAs -->
<rect x="603" y="670" width="315" height="355" fill="#026a36" stroke="#dedede" stroke-width="2"/>
<rect x="603" y="670" width="315" height="355" fill="url(#yp)"/>
<g fill="#026a36"><rect x="635" y="690" width="85" height="35"/><rect x="603" y="820" width="30" height="205"/><rect x="870" y="700" width="48" height="325"/><rect x="603" y="980" width="315" height="45"/></g>
<rect x="635" y="690" width="85" height="35" fill="url(#gp)"/><rect x="603" y="820" width="30" height="205" fill="url(#tp)"/><rect x="870" y="700" width="48" height="325" fill="url(#gp)"/><rect x="603" y="980" width="315" height="45" fill="url(#gp)"/>
<g fill="#026a36"><rect x="670" y="755" width="40" height="28"/><rect x="772" y="755" width="28" height="38"/><rect x="835" y="745" width="30" height="40"/><rect x="698" y="800" width="30" height="32"/><rect x="660" y="880" width="40" height="28"/><rect x="735" y="880" width="40" height="28"/><rect x="730" y="920" width="45" height="25"/></g>
<rect x="365" y="648" width="158" height="162" fill="url(#tp)" stroke="#dedede" stroke-width="2"/><rect x="365" y="650" width="60" height="60" fill="url(#gp)"/><rect x="470" y="660" width="52" height="70" fill="url(#yp)"/><rect x="375" y="750" width="120" height="50" fill="url(#gp)"/><rect x="410" y="700" width="60" height="60" fill="#026a36"/>
<rect x="160" y="395" width="137" height="115" fill="url(#yd)" stroke="#dedede" stroke-width="2"/>
<rect x="770" y="372" width="150" height="170" fill="url(#yd)" stroke="#dedede" stroke-width="2"/>
<rect x="363" y="915" width="102" height="145" fill="url(#yp)"/><rect x="420" y="930" width="40" height="60" fill="url(#tp)"/>
<rect x="515" y="368" width="55" height="60" fill="url(#yp)"/><rect x="530" y="448" width="58" height="92" fill="url(#yd)"/><rect x="408" y="450" width="55" height="75" fill="url(#yp)"/>
<rect x="997" y="880" width="78" height="82" fill="url(#yp)"/><rect x="487" y="1115" width="55" height="60" fill="url(#yp)"/><rect x="735" y="1130" width="45" height="45" fill="url(#yp)"/><rect x="787" y="1130" width="45" height="45" fill="url(#yp)"/><rect x="843" y="1125" width="55" height="50" fill="url(#yd)"/><rect x="1168" y="920" width="100" height="115" fill="url(#yp)"/><rect x="1168" y="920" width="30" height="60" fill="url(#tp)"/><rect x="1235" y="785" width="75" height="70" fill="url(#yd)"/><rect x="1378" y="808" width="50" height="55" fill="url(#yp)"/><rect x="1355" y="960" width="65" height="65" fill="url(#yd)"/><rect x="1280" y="1130" width="45" height="45" fill="url(#yp)"/><rect x="155" y="640" width="72" height="75" fill="url(#vg)" stroke="#dedede" stroke-width="2"/>
<!-- chips -->
<g fill="#026a36" stroke="#dedede" stroke-width="2"><rect x="185" y="195" width="62" height="58"/><rect x="180" y="310" width="55" height="60"/><rect x="135" y="920" width="90" height="65"/><rect x="178" y="1030" width="40" height="40"/><rect x="1187" y="248" width="83" height="68"/><rect x="1295" y="228" width="90" height="68"/><rect x="948" y="478" width="55" height="65"/><rect x="600" y="552" width="42" height="38"/><rect x="597" y="597" width="35" height="45"/><rect x="825" y="170" width="30" height="70"/></g>
<g fill="#7d7d7d"><rect x="152" y="935" width="25" height="35"/><rect x="183" y="935" width="25" height="35"/><rect x="1198" y="265" width="28" height="32"/><rect x="1230" y="265" width="28" height="32"/><rect x="1312" y="245" width="24" height="32"/><rect x="1345" y="245" width="24" height="32"/><rect x="195" y="212" width="25" height="25"/><rect x="195" y="328" width="25" height="25"/><rect x="185" y="1038" width="22" height="22"/><rect x="52" y="415" width="25" height="25"/><rect x="52" y="850" width="25" height="25"/><rect x="1457" y="310" width="36" height="398"/><rect x="1163" y="1082" width="38" height="32"/></g>
<!-- pads -->
<g fill="#ffd83d">
<rect x="40" y="228" width="26" height="26"/><rect x="292" y="228" width="16" height="16"/><rect x="332" y="228" width="16" height="16"/><rect x="105" y="205" width="42" height="42"/><rect x="815" y="70" width="70" height="28"/><rect x="215" y="1155" width="25" height="25"/><rect x="250" y="1155" width="25" height="25"/><rect x="286" y="1155" width="24" height="25"/><rect x="1405" y="1155" width="22" height="28"/><rect x="1445" y="1155" width="22" height="28"/><rect x="1155" y="82" width="60" height="18"/>
</g>
<g fill="#ffd83d" stroke="#dedede" stroke-width="2">
<rect x="385" y="368" width="32" height="52"/><rect x="428" y="395" width="30" height="55"/><rect x="495" y="445" width="32" height="52"/><rect x="580" y="372" width="36" height="50"/><rect x="615" y="440" width="20" height="60"/><rect x="445" y="345" width="20" height="30"/><rect x="487" y="345" width="27" height="30"/>
<rect x="970" y="822" width="34" height="46"/><rect x="1008" y="822" width="34" height="46"/><rect x="1045" y="825" width="32" height="46"/><rect x="938" y="938" width="28" height="35"/><rect x="960" y="982" width="28" height="35"/><rect x="1083" y="958" width="34" height="28"/>
<rect x="312" y="903" width="45" height="38"/><rect x="312" y="950" width="45" height="38"/><rect x="300" y="998" width="58" height="45"/><rect x="270" y="1053" width="88" height="25"/><rect x="473" y="915" width="45" height="35"/><rect x="522" y="900" width="25" height="45"/><rect x="550" y="910" width="25" height="35"/><rect x="525" y="955" width="25" height="35"/><rect x="553" y="958" width="25" height="35"/><rect x="270" y="1085" width="75" height="22"/>
<rect x="355" y="1150" width="22" height="30"/><rect x="382" y="1135" width="22" height="45"/><rect x="405" y="1140" width="25" height="40"/><rect x="433" y="1138" width="25" height="42"/><rect x="461" y="1125" width="25" height="50"/><rect x="545" y="1130" width="25" height="48"/><rect x="572" y="1135" width="25" height="45"/><rect x="598" y="1135" width="25" height="45"/>
<rect x="1195" y="805" width="32" height="48"/><rect x="1338" y="875" width="30" height="48"/><rect x="1430" y="935" width="22" height="40"/><rect x="1300" y="995" width="35" height="40"/><rect x="1362" y="1035" width="35" height="30"/><rect x="1360" y="1070" width="35" height="30"/><rect x="1398" y="875" width="35" height="30"/>
</g>
<g fill="#026a36"><rect x="387" y="388" width="28" height="10"/><rect x="582" y="392" width="32" height="10"/><rect x="497" y="465" width="28" height="8"/><rect x="972" y="842" width="30" height="8"/><rect x="1010" y="842" width="30" height="8"/><rect x="1047" y="845" width="28" height="8"/><rect x="330" y="905" width="8" height="34"/><rect x="330" y="952" width="8" height="34"/><rect x="325" y="1000" width="8" height="41"/><rect x="1340" y="895" width="26" height="8"/></g>
<g fill="#0000ee"><circle cx="230" cy="197" r="6"/><circle cx="215" cy="224" r="7"/><circle cx="248" cy="305" r="7"/><circle cx="253" cy="315" r="7"/><circle cx="207" cy="340" r="7"/><circle cx="250" cy="345" r="7"/><circle cx="253" cy="365" r="7"/><circle cx="172" cy="530" r="7"/><circle cx="187" cy="520" r="7"/><circle cx="190" cy="677" r="7"/><circle cx="560" cy="496" r="7"/><circle cx="597" cy="710" r="7"/><circle cx="582" cy="728" r="7"/><circle cx="780" cy="658" r="7"/><circle cx="762" cy="848" r="7"/><circle cx="932" cy="910" r="7"/><circle cx="932" cy="997" r="7"/><circle cx="1290" cy="808" r="7"/><circle cx="1403" cy="835" r="7"/><circle cx="1197" cy="1124" r="7"/><circle cx="1214" cy="1155" r="7"/>
<circle cx="905" cy="482" r="14"/><circle cx="885" cy="493" r="7"/><circle cx="810" cy="513" r="8"/><circle cx="845" cy="520" r="7"/><circle cx="860" cy="512" r="7"/><circle cx="860" cy="525" r="7"/><circle cx="820" cy="535" r="7"/><circle cx="835" cy="535" r="7"/><circle cx="790" cy="540" r="9"/><circle cx="865" cy="543" r="7"/><circle cx="885" cy="540" r="9"/><circle cx="895" cy="535" r="7"/><circle cx="915" cy="520" r="8"/><circle cx="915" cy="535" r="7"/><circle cx="905" cy="540" r="7"/></g>
<circle cx="1418" cy="135" r="12" fill="#fff" stroke="#bfbfbf" stroke-width="6"/>
</g>
</svg>
<svg class="a" style="left:1514px;top:430px" width="9" height="116"><path d="M9 0Q0 12 0 30V86Q0 104 9 116z" fill="#d5e7fb"/><path d="M7 55l-3 3 3 3" fill="none" stroke="#5d9bf6" stroke-width="1.300"/></svg>

<!-- status bar -->
<div class="a" style="left:0;top:838px;width:1523px;height:20px;background:#0791dc;text-align:center;color:#fff;font-family:'Liberation Mono',monospace;font-size:15px;line-height:22px">XZZ Schematics https://www.xzztools.com</div>
</div></body></html>
